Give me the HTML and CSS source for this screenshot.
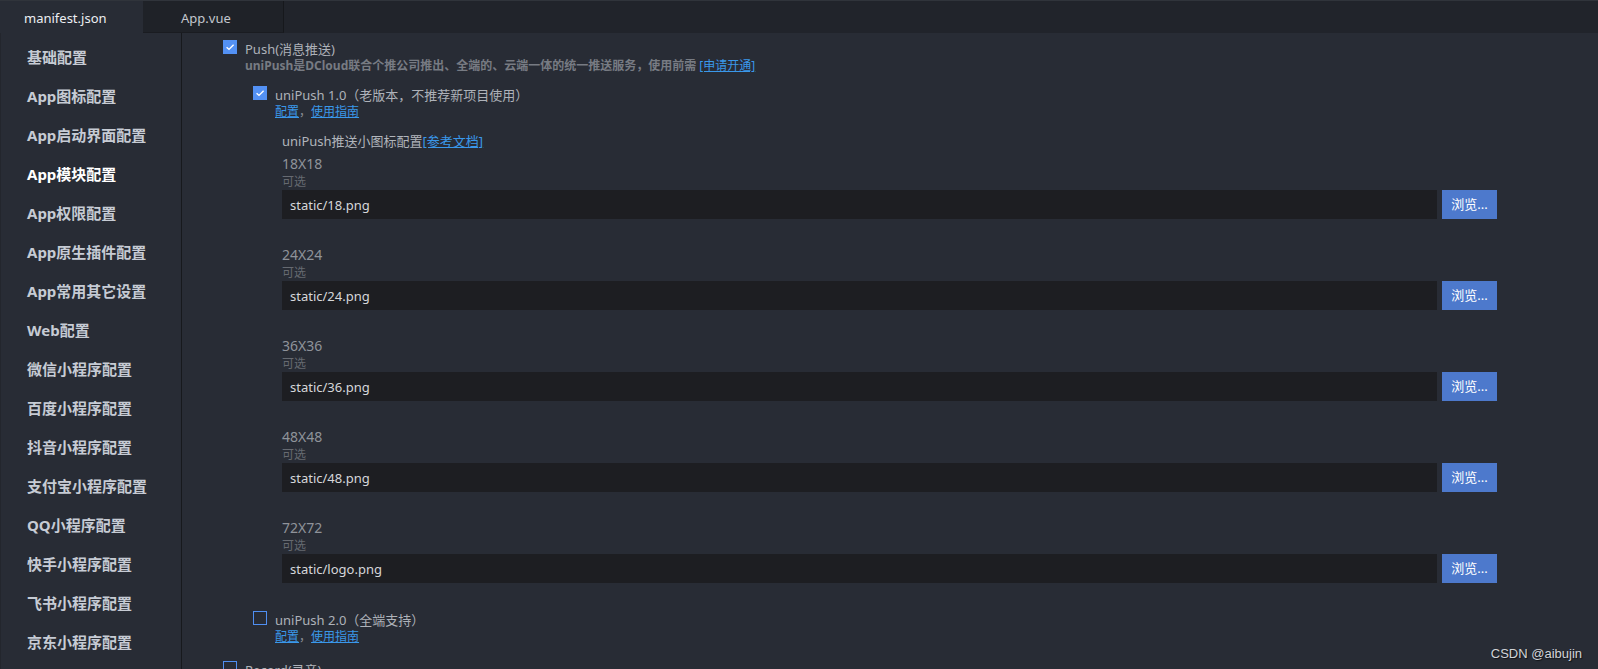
FILE: index.html
```html
<!DOCTYPE html>
<html lang="zh-CN">
<head>
<meta charset="utf-8">
<title>manifest.json</title>
<link rel="stylesheet" href="styles.css">
</head>
<body>
<div class="app">
  <div class="tabbar">
    <div class="tab tab-active">manifest.json</div>
    <div class="tab tab-idle">App.vue</div>
    <div class="tab-fill"></div>
  </div>
  <div class="main">
    <nav class="sidebar">
      <div class="nav-item">基础配置</div>
      <div class="nav-item">App图标配置</div>
      <div class="nav-item">App启动界面配置</div>
      <div class="nav-item active">App模块配置</div>
      <div class="nav-item">App权限配置</div>
      <div class="nav-item">App原生插件配置</div>
      <div class="nav-item">App常用其它设置</div>
      <div class="nav-item">Web配置</div>
      <div class="nav-item">微信小程序配置</div>
      <div class="nav-item">百度小程序配置</div>
      <div class="nav-item">抖音小程序配置</div>
      <div class="nav-item">支付宝小程序配置</div>
      <div class="nav-item">QQ小程序配置</div>
      <div class="nav-item">快手小程序配置</div>
      <div class="nav-item">飞书小程序配置</div>
      <div class="nav-item">京东小程序配置</div>
    </nav>
    <section class="content">
      <div class="check-row">
        <span class="cb checked"><svg viewBox="0 0 14 14" width="14" height="14"><path d="M3.6 7.2 L6 9.4 L10.6 4.8" fill="none" stroke="#fff" stroke-width="1.4"/></svg></span>
        <span class="label">Push(消息推送)</span>
      </div>
      <div class="desc">uniPush是DCloud联合个推公司推出、全端的、云端一体的统一推送服务，使用前需 <a class="link">[申请开通]</a></div>

      <div class="sub">
        <div class="check-row">
          <span class="cb checked"><svg viewBox="0 0 14 14" width="14" height="14"><path d="M3.6 7.2 L6 9.4 L10.6 4.8" fill="none" stroke="#fff" stroke-width="1.4"/></svg></span>
          <span class="label">uniPush 1.0（老版本，不推荐新项目使用）</span>
        </div>
        <div class="links"><a class="link">配置</a><span class="sep">，</span><a class="link">使用指南</a></div>

        <div class="icons">
          <div class="icons-title">uniPush推送小图标配置<a class="link">[参考文档]</a></div>
          <div class="groups">
            <div class="group">
              <div class="size">18X18</div>
              <div class="opt">可选</div>
              <div class="field"><div class="input">static/18.png</div><div class="btn">浏览...</div></div>
            </div>
            <div class="group">
              <div class="size">24X24</div>
              <div class="opt">可选</div>
              <div class="field"><div class="input">static/24.png</div><div class="btn">浏览...</div></div>
            </div>
            <div class="group">
              <div class="size">36X36</div>
              <div class="opt">可选</div>
              <div class="field"><div class="input">static/36.png</div><div class="btn">浏览...</div></div>
            </div>
            <div class="group">
              <div class="size">48X48</div>
              <div class="opt">可选</div>
              <div class="field"><div class="input">static/48.png</div><div class="btn">浏览...</div></div>
            </div>
            <div class="group">
              <div class="size">72X72</div>
              <div class="opt">可选</div>
              <div class="field"><div class="input">static/logo.png</div><div class="btn">浏览...</div></div>
            </div>
          </div>
        </div>

        <div class="check-row v2">
          <span class="cb"></span>
          <span class="label">uniPush 2.0（全端支持）</span>
        </div>
        <div class="links"><a class="link">配置</a><span class="sep">，</span><a class="link">使用指南</a></div>
      </div>

      <div class="check-row record">
        <span class="cb"></span>
        <span class="label">Record(录音)</span>
      </div>
    </section>
  </div>
  <div class="watermark">CSDN @aibujin</div>
</div>
</body>
</html>
```
FILE: styles.css
```css
html, body {
  margin: 0;
  padding: 0;
  height: 100%;
  overflow: hidden;
}
body {
  background: #282c35;
  font-family: "Noto Sans", "Noto Sans CJK SC", sans-serif;
  font-size: 13px;
  color: #aeb2b9;
}
.app {
  position: relative;
  height: 669px;
  display: flex;
  flex-direction: column;
}
.tabbar {
  height: 32px;
  border-top: 1px solid #30343b;
  display: flex;
  background: #21242b;
  flex: none;
}
.tab {
  height: 32px;
  line-height: 34px;
  font-size: 13px;
  box-sizing: border-box;
}
.tab-active {
  width: 143px;
  padding-left: 24px;
  background: #282c35;
  color: #eceef2;
}
.tab-idle {
  width: 141px;
  padding-left: 38px;
  background: #1f2228;
  color: #c3c7ce;
  border-right: 1px solid #16181c;
  border-bottom: 1px solid #1a1c21;
}
.tab-fill {
  flex: 1;
  background: #21242b;
}
.main {
  flex: 1;
  display: flex;
  min-height: 0;
}
.sidebar {
  flex: none;
  box-sizing: border-box;
  border-left: 1px solid #23262d;
  border-right: 1px solid #17191d;
  padding-top: 5px;
  padding-left: 26px;
  width: 182px;
}
.nav-item {
  height: 39px;
  line-height: 39px;
  font-size: 15px;
  font-weight: 700;
  color: #c6cbd4;
  white-space: nowrap;
}
.nav-item.active {
  color: #ffffff;
}
.content {
  flex: 1;
  padding-left: 41px;
  padding-top: 6px;
  overflow: hidden;
}
.check-row {
  display: flex;
  align-items: center;
  height: 18px;
  gap: 8px;
}
.label {
  line-height: 18px;
  position: relative;
  top: 1px;
  color: #aeb2b9;
  white-space: nowrap;
}
.cb {
  width: 14px;
  height: 14px;
  box-sizing: border-box;
  border: 1.5px solid #4f8ff2;
  flex: none;
  display: block;
  position: relative;
  top: -1px;
}
.cb.checked {
  background: #5391f4;
  border: none;
}
.cb svg {
  display: block;
}
.desc {
  margin-left: 22px;
  line-height: 18px;
  font-size: 12px;
  font-weight: 700;
  color: #777b83;
  white-space: nowrap;
}
.link {
  color: #3a98ea;
  text-decoration: underline;
  font-weight: 400;
  cursor: pointer;
}
.sep {
  color: #8a8e95;
}
.sub {
  margin-left: 30px;
  margin-top: 10px;
}
.links {
  margin-left: 22px;
  line-height: 18px;
  font-size: 12px;
}
.icons {
  margin-left: 29px;
  margin-top: 11px;
}
.icons-title {
  line-height: 18px;
  color: #b1b5bb;
}
.groups {
  display: flex;
  flex-direction: column;
  gap: 27px;
  margin-top: 5px;
}
.size {
  line-height: 18px;
  font-size: 14px;
  color: #8f939a;
}
.opt {
  line-height: 17px;
  font-size: 12px;
  color: #666a71;
}
.field {
  display: flex;
  gap: 5px;
  height: 29px;
}
.input {
  width: 1155px;
  background: #1d1e22;
  color: #d6d7da;
  line-height: 31px;
  padding-left: 8px;
  box-sizing: border-box;
  font-size: 13px;
}
.btn {
  width: 55px;
  background: #4d79cc;
  color: #ffffff;
  text-align: center;
  line-height: 29px;
  font-size: 13px;
}
.check-row.v2 {
  margin-top: 27px;
}
.check-row.record {
  margin-top: 14px;
}
.watermark {
  position: absolute;
  right: 16px;
  bottom: 8px;
  font-family: "Liberation Sans", Arial, sans-serif;
  font-size: 13px;
  color: #d2d4d8;
  text-shadow: 1px 1px 1px rgba(0,0,0,0.6);
}
```
